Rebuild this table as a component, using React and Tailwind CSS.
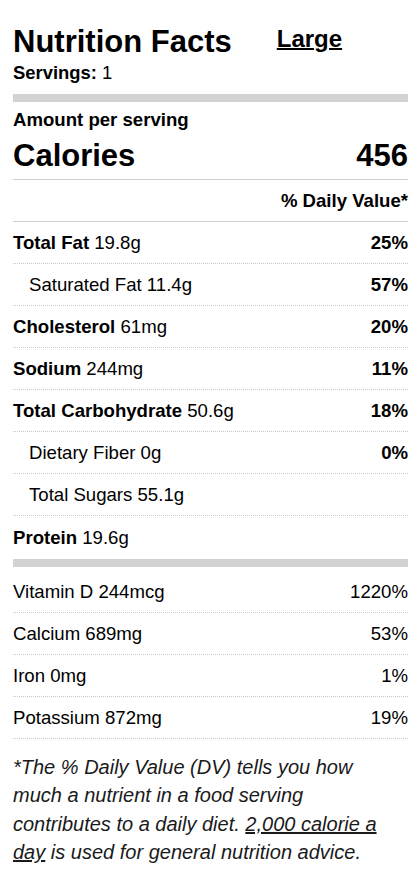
import React from 'react';

const mainRows = [
    { label: 'Total Fat', amount: '19.8g', dv: '25%', bold: true },
    { label: 'Saturated Fat', amount: '11.4g', dv: '57%', indent: true },
    { label: 'Cholesterol', amount: '61mg', dv: '20%', bold: true },
    { label: 'Sodium', amount: '244mg', dv: '11%', bold: true },
    { label: 'Total Carbohydrate', amount: '50.6g', dv: '18%', bold: true },
    { label: 'Dietary Fiber', amount: '0g', dv: '0%', indent: true },
    { label: 'Total Sugars', amount: '55.1g', dv: '', indent: true },
];

const vitamins = [
    { label: 'Vitamin D', amount: '244mcg', dv: '1220%' },
    { label: 'Calcium', amount: '689mg', dv: '53%' },
    { label: 'Iron', amount: '0mg', dv: '1%' },
    { label: 'Potassium', amount: '872mg', dv: '19%' },
];

const Row = ({ label, amount, dv, bold, indent, dvBold = true }) => (
    <div className="h-[42px] flex items-center justify-between border-b border-dotted border-[#c8c8c8] text-[18.6px] leading-[22px]">
        <span className={indent ? 'pl-4' : ''}>
            <span className={bold ? 'font-bold' : ''}>{label}</span> {amount}
        </span>
        <span className={dvBold ? 'font-bold' : ''}>{dv}</span>
    </div>
);

const App = () => {
    return (
        <div className="bg-white min-h-[880px] pl-[13px] pr-[10px] text-black" style={{ fontFamily: '"Liberation Sans", Arial, sans-serif' }}>
            {/* Header */}
            <div className="flex items-start pt-[24px]">
                <h1 className="text-[31px] leading-[36px] font-bold">Nutrition Facts</h1>
                <span className="ml-[45px] mt-[1px] text-[24px] leading-[28px] font-bold underline decoration-2 underline-offset-[1px]">Large</span>
            </div>
            <div className="mt-[2px] text-[18.4px] leading-[22px]">
                <span className="font-bold">Servings:</span> 1
            </div>
            <div className="mt-[10px] h-[8px] bg-[#d2d2d2]"></div>

            {/* Calories */}
            <div className="mt-[7px] text-[18.6px] leading-[22px] font-bold">Amount per serving</div>
            <div className="mt-[7px] pb-[5px] flex justify-between border-b border-[#cfcfcf] text-[31px] leading-[36px] font-bold">
                <span>Calories</span>
                <span>456</span>
            </div>
            <div className="h-[42px] flex items-center justify-end border-b border-[#cfcfcf] text-[18.6px] leading-[22px] font-bold">
                % Daily Value*
            </div>

            {mainRows.map(row => (
                <Row key={row.label} {...row} />
            ))}
            <div className="h-[43px] flex items-center text-[18.6px] leading-[22px]">
                <span><span className="font-bold">Protein</span> 19.6g</span>
            </div>
            <div className="h-[8px] bg-[#d2d2d2]"></div>

            <div className="mt-[4px]">
                {vitamins.map(row => (
                    <Row key={row.label} {...row} dvBold={false} />
                ))}
            </div>

            {/* Footnote */}
            <p className="mt-[14px] pr-[16px] text-[20px] leading-[28.4px] italic text-[#1a1a1a]">
                *The % Daily Value (DV) tells you how much a nutrient in a food serving contributes to a daily diet.{' '}
                <span className="underline">2,000 calorie a day</span> is used for general nutrition advice.
            </p>
        </div>
    );
};

export default App;
